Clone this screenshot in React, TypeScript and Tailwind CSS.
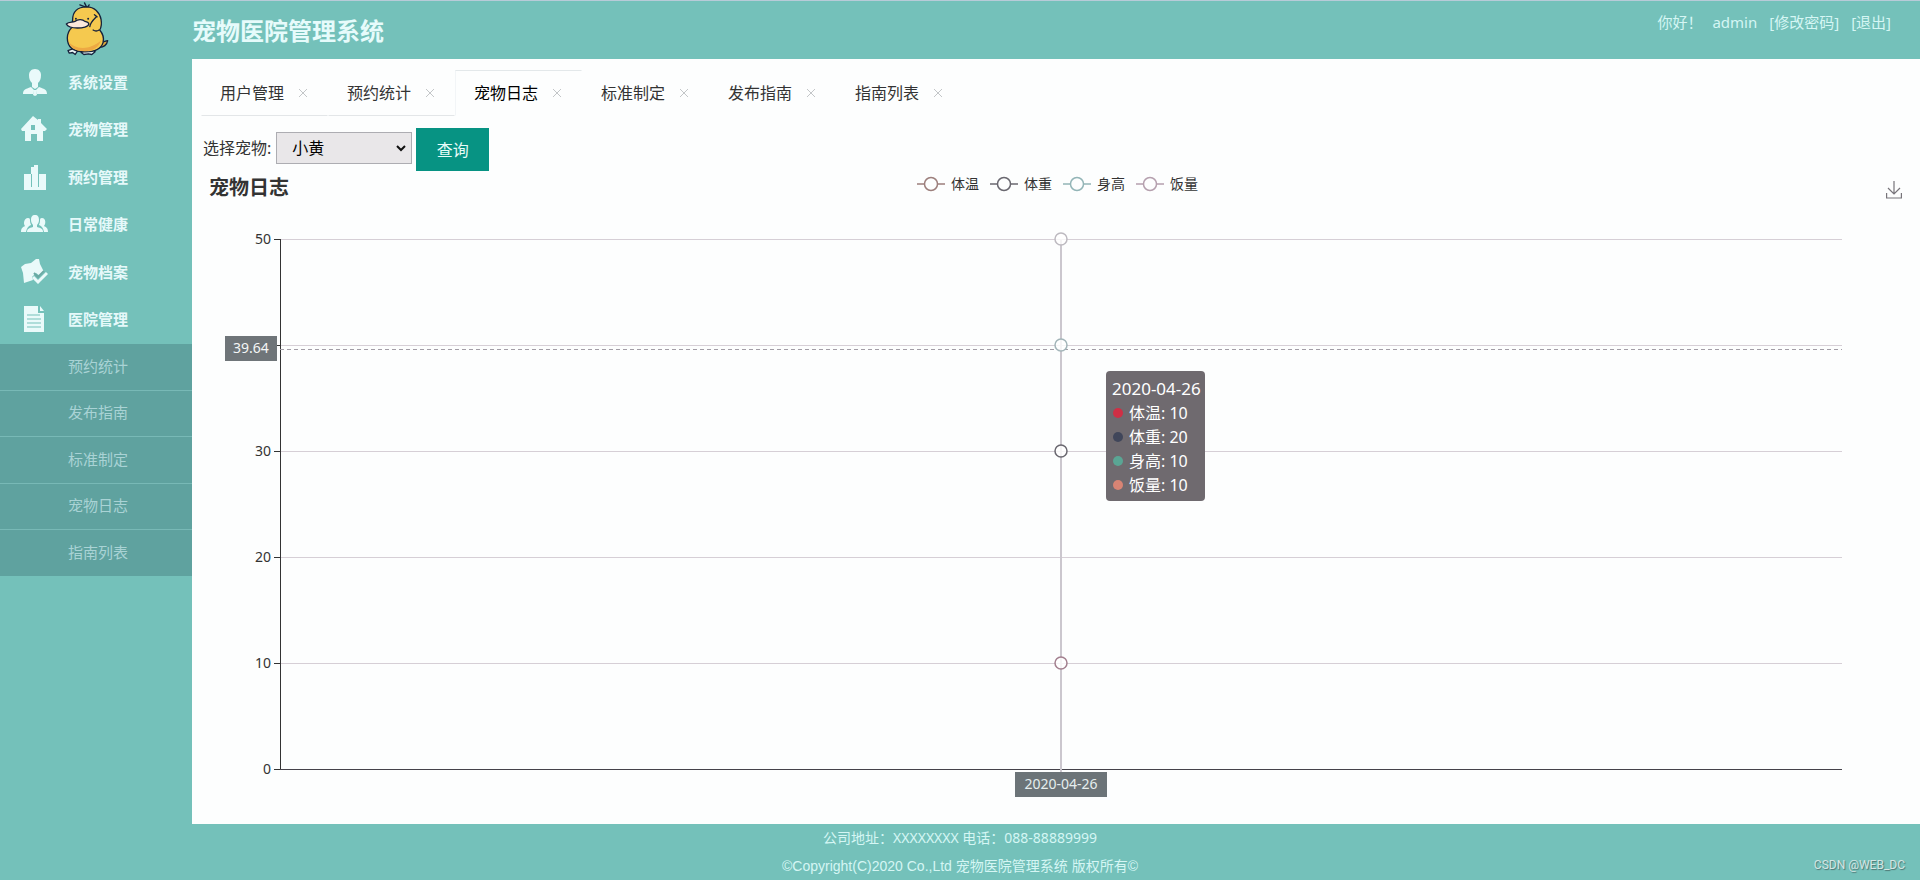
import { useLayoutEffect, useRef, useState } from 'react';
import type { ReactNode } from 'react';

const mainMenu = [
  { label: '系统设置', icon: 'user' },
  { label: '宠物管理', icon: 'home' },
  { label: '预约管理', icon: 'bars' },
  { label: '日常健康', icon: 'group' },
  { label: '宠物档案', icon: 'archive' },
  { label: '医院管理', icon: 'doc' },
];

const subMenu = ['预约统计', '发布指南', '标准制定', '宠物日志', '指南列表'];

const tabs = ['用户管理', '预约统计', '宠物日志', '标准制定', '发布指南', '指南列表'];

const series = [
  { name: '体温', value: 10, stroke: '#9c7f7c', dot: '#cf2f45' },
  { name: '体重', value: 20, stroke: '#6a6870', dot: '#40465a' },
  { name: '身高', value: 10, stroke: '#93b5b7', dot: '#5aa594' },
  { name: '饭量', value: 10, stroke: '#b5a0ae', dot: '#d88474' },
];

const iconShapes: Record<string, ReactNode> = {
  user: (
    <>
      <path d="M15 1c4 0 6 3 6 6 0 4-1 6-3 8v4l-3 2-3-2v-4c-2-2-3-4-3-8 0-3 2-6 6-6z" />
      <path d="M11 19l3 3-1 4H3c0-4 2-5 8-7zM19 19l-3 3 1 4h10c0-4-2-5-8-7zM14 22h2l1 5-2 1-2-1z" />
    </>
  ),
  home: (
    <path
      fillRule="evenodd"
      d="M13 1l5 4V4h3v4l6 6-2 2h-2v10h-6v-7h-6v7H5V16H2l-1-2zM11 10v5h4v-5z"
    />
  ),
  bars: (
    <path fillRule="evenodd" d="M4 11h7V4h3V2h4v9h8v16H4zM11 11v13h1V11zM18 11v13h1V11z" />
  ),
  group: (
    <>
      <path d="M15 5c3 0 4 2 4 5 0 2-1 4-2 5v2c4 1 6 2 6 5H7c0-3 2-4 6-5v-2c-1-1-2-3-2-5 0-3 1-5 4-5z" />
      <path d="M8 8c2 0 2 1 2 3 0 2 1 3 1 4-3 1-4 3-5 7H1c0-4 2-5 4-6-2-2-1-8 3-8zM22 8c-2 0-2 1-2 3 0 2-1 3-1 4 3 1 4 3 5 7h4c0-4-2-5-4-6 2-2 2-8-2-8z" />
    </>
  ),
  archive: (
    <>
      <path d="M1 9l4-3 6-1 5-4h3l1 5 4 8-4 4-4-3-4 4 1 3-9 3L3 15z" />
      <path d="M13 19l5 5 9-9" fill="none" stroke="#eafafa" strokeWidth="3" />
      <path d="M14 15l4 4 6-6" fill="none" stroke="#6aa9a3" strokeWidth="2" />
    </>
  ),
  doc: (
    <>
      <path d="M4 1h14v7h6v19H4zM20 1l4 5h-4z" />
      <path d="M7 10h13M7 14h14M7 18h14M7 22h14" stroke="#74c1ba" />
    </>
  ),
};

function MenuIcon({ name }: { name: string }) {
  return (
    <svg viewBox="0 0 28 28" className="h-7 w-7 shrink-0" fill="#eafafa" aria-hidden="true">
      {iconShapes[name]}
    </svg>
  );
}

function DuckLogo() {
  return (
    <svg viewBox="190 6 136 162" className="h-[54px] w-[45px]" aria-label="logo">
      <g stroke="#14213b" strokeWidth="4" strokeLinejoin="round" strokeLinecap="round">
        <path d="M298 126c10 2 14-2 24-4-2 12-12 22-28 20z" fill="#e0a83c" />
        <path d="M218 146l-16 6 4 8 10-2 8 6 8-12z" fill="#e8f4f4" />
        <path d="M264 150l-22 8 8 6 14-2 10 2 10-8-8-8z" fill="#e8f4f4" />
        <path
          d="M216 60c0-26 16-40 42-40 24 0 40 16 44 38 2 12 2 22-4 32 10 12 14 24 10 38-6 20-26 28-54 28-34 0-54-14-54-42 0-14 6-24 14-32z"
          fill="#f5c94f"
        />
        <path
          d="M204 124c12 22 60 32 98-2-8 22-24 32-50 32-26 0-44-10-48-30z"
          fill="#eda943"
          stroke="none"
        />
        <path
          d="M197 72c8-8 18-4 26-8 10-8 24-6 30 0 8 2 12 2 12 8 0 8-20 12-34 12-18 0-30-4-34-12z"
          fill="#fbe9dc"
        />
        <path d="M288 50c-6 6-18 16-20 30M282 44l8 6M296 90c-6 4-12 4-18 0" fill="none" />
        <path d="M254 20l-16-6M258 20l-6-12M262 20l4-6" fill="none" />
      </g>
      <circle cx="226" cy="56" r="3" fill="#14213b" />
      <circle cx="263" cy="56" r="3" fill="#14213b" />
    </svg>
  );
}

function Sidebar() {
  return (
    <aside className="w-48 shrink-0">
      <nav>
        <ul className="flex h-[285px] flex-col">
          {mainMenu.map((item) => (
            <li key={item.label} className="flex-1">
              <a
                href="#"
                className="flex h-full items-center gap-5 pb-[2px] pl-5 text-[15px] font-bold text-[#e6f9fa]"
              >
                <MenuIcon name={item.icon} />
                {item.label}
              </a>
            </li>
          ))}
        </ul>
        <ul className="flex h-[232px] flex-col divide-y divide-[#78b9b6] bg-[#5fa29f]">
          {subMenu.map((label) => (
            <li key={label} className="flex-1">
              <a
                href="#"
                className="flex h-full items-center pb-[2px] pl-[68px] text-[15px] text-[#a9d3d5]"
              >
                {label}
              </a>
            </li>
          ))}
        </ul>
      </nav>
    </aside>
  );
}

function TabBar() {
  const [active, setActive] = useState(2);

  return (
    <div className="flex pt-[11px] pl-[9px]">
      {tabs.map((label, i) => (
        <div
          key={label}
          className={`flex h-[46px] w-[127px] items-center gap-[14px] border pb-px pl-[18px] ${
            i === active
              ? 'border-transparent border-t-[#e3e8ea] border-l-[#f2f5f7] text-black'
              : i < active
                ? 'border-transparent border-b-[#e3e6e8] text-[#333]'
                : 'border-transparent text-[#333]'
          }`}
        >
          <button type="button" onClick={() => setActive(i)} className="text-base">
            {label}
          </button>
          <button type="button" aria-label={`关闭${label}`}>
            <svg viewBox="0 0 10 10" className="h-[10px] w-[10px]" stroke="#c3c6c8" fill="none">
              <path d="M1 1l8 8M9 1l-8 8" />
            </svg>
          </button>
        </div>
      ))}
    </div>
  );
}

function QueryForm() {
  return (
    <form className="flex items-center pt-3 pl-[11px]" onSubmit={(e) => e.preventDefault()}>
      <label htmlFor="pet" className="pb-1 text-base text-[#333]">
        选择宠物:
      </label>
      <div className="relative mr-1 ml-[5px] pb-1">
        <select
          id="pet"
          className="block h-8 w-[136px] appearance-none border border-[#adadb2] bg-[#e9e7e9] pl-[15px] text-base leading-none text-black"
        >
          <option>小黄</option>
        </select>
        <svg
          viewBox="0 0 10 8"
          className="pointer-events-none absolute top-3 right-[6px] h-2 w-[10px]"
          fill="none"
          stroke="#111"
          strokeWidth="2"
        >
          <path d="M1 2l4 4 4-4" />
        </svg>
      </div>
      <button type="submit" className="h-[43px] w-[73px] bg-[#079383] text-base text-[#e6fbf8]">
        查询
      </button>
    </form>
  );
}

const TOP = 36;
const STEP = 106;
const LEFT = 88;
const RIGHT = 78;

function LineChart() {
  const box = useRef<HTMLDivElement>(null);
  const [width, setWidth] = useState(1728);

  useLayoutEffect(() => {
    const el = box.current;
    if (!el) return;
    const measure = () => setWidth(el.clientWidth);
    measure();
    const observer = new ResizeObserver(measure);
    observer.observe(el);
    return () => observer.disconnect();
  }, []);

  const right = width - RIGHT;
  const mid = Math.round((LEFT + right) / 2);
  const yOf = (v: number) => TOP + ((50 - v) / 10) * STEP;

  // stacked totals of the four series
  const points = [
    { total: 10, stroke: '#a3808f' },
    { total: 30, stroke: '#6a6870' },
    { total: 40, stroke: '#a3b5b9' },
    { total: 50, stroke: '#bdbac0' },
  ];

  return (
    <div ref={box} className="relative h-[620px]">
      <svg width={width} height={620} className="block text-sm" shapeRendering="auto">
        {[50, 40, 30, 20, 10].map((v) => (
          <line key={v} x1={LEFT} x2={right} y1={yOf(v) - 0.5} y2={yOf(v) - 0.5} stroke="#d6cfd6" />
        ))}
        {[50, 40, 30, 20, 10, 0].map((v) => (
          <g key={v}>
            <line x1={LEFT - 6} x2={LEFT} y1={yOf(v) - 0.5} y2={yOf(v) - 0.5} stroke="#333" />
            {v !== 40 && (
              <text x={LEFT - 9} y={yOf(v) + 4} textAnchor="end" fill="#333">
                {v}
              </text>
            )}
          </g>
        ))}
        <line x1={LEFT + 0.5} x2={LEFT + 0.5} y1={TOP - 1} y2={yOf(0)} stroke="#333" />
        <line x1={LEFT} x2={right} y1={yOf(0) - 0.5} y2={yOf(0) - 0.5} stroke="#45424a" />
        <line
          x1={LEFT}
          x2={right}
          y1={TOP + 109.5}
          y2={TOP + 109.5}
          stroke="#a29da6"
          strokeDasharray="4 3"
        />
        <line x1={mid} x2={mid} y1={TOP} y2={yOf(0) + 3} stroke="#cbc7ce" strokeWidth="2" />
        {points.map((p) => (
          <circle
            key={p.total}
            cx={mid}
            cy={yOf(p.total) - 1}
            r="6"
            fill="#fff"
            fillOpacity="0.8"
            stroke={p.stroke}
            strokeWidth="1.5"
          />
        ))}
        <rect x="33" y="132" width="52" height="25" fill="#6f7579" />
        <text x="59" y="149" textAnchor="middle" fill="#f4f6f6">
          39.64
        </text>
        <rect x={mid - 46} y="568" width="92" height="25" fill="#6c7478" />
        <text x={mid} y="585" textAnchor="middle" fill="#e6eeee">
          2020-04-26
        </text>
      </svg>
      <div className="absolute top-[167px] left-[calc(50%+50px)] w-[99px] rounded bg-[#6f6a6f] px-[6px] pt-[6px] pb-1 text-base leading-6 text-white">
        <div className="text-[17px] leading-6 whitespace-nowrap">2020-04-26</div>
        {series.map((s) => (
          <div key={s.name} className="flex items-center gap-[5px] whitespace-nowrap">
            <svg viewBox="0 0 12 12" className="h-3 w-3">
              <circle cx="6" cy="6" r="5" fill={s.dot} />
            </svg>
            {s.name}: {s.value}
          </div>
        ))}
      </div>
    </div>
  );
}

function ChartHeader() {
  return (
    <div className="grid h-[33px] grid-cols-[1fr_auto_1fr] items-center pr-[18px] pl-[17px]">
      <h2 className="text-xl leading-none font-bold text-[#333]">宠物日志</h2>
      <ul className="flex gap-[11px] pb-2 pl-1 text-sm leading-5 text-[#333]">
        {series.map((s) => (
          <li key={s.name} className="flex items-center gap-[6px]">
            <svg viewBox="0 0 28 16" className="h-4 w-7" fill="none" stroke={s.stroke} strokeWidth="1.5">
              <path d="M0 8h7M21 8h7" />
              <circle cx="14" cy="8" r="6.5" />
            </svg>
            {s.name}
          </li>
        ))}
      </ul>
      <button type="button" aria-label="保存为图片" className="justify-self-end pt-1">
        <svg viewBox="0 0 16 18" className="block h-[18px] w-4" fill="none" stroke="#77747a" strokeWidth="1.2">
          <path d="M8 0v13M2 7l6 6 6-6M.6 12v5h14.8v-5" />
        </svg>
      </button>
    </div>
  );
}

export default function App() {
  return (
    <div className="flex min-h-screen flex-col bg-[#74c1ba] font-['Noto_Sans','Noto_Sans_CJK_SC',sans-serif]">
      <header className="flex h-[59px] border-t border-[#b8cbd8]">
        <div className="flex w-48 shrink-0 pt-px pl-16">
          <DuckLogo />
        </div>
        <h1 className="flex-1 pt-3 text-2xl leading-9 font-bold text-[#e6fbfb]">宠物医院管理系统</h1>
        <div className="flex pt-[9px] pr-[29px] text-[15px] leading-6 text-[#d5f6f4]">
          <span className="mr-[10px]">你好！</span>
          <span className="mr-3">admin</span>
          <a href="#" className="mr-3">
            [修改密码]
          </a>
          <a href="#">[退出]</a>
        </div>
      </header>

      <div className="flex flex-1">
        <Sidebar />
        <main className="min-w-0 flex-1 bg-[#fdfefe]">
          <TabBar />
          <QueryForm />
          <ChartHeader />
          <LineChart />
        </main>
      </div>

      <footer className="relative h-14 text-center text-sm leading-7 text-[#d5f6f4]">
        <p>公司地址：XXXXXXXX 电话：088-88889999</p>
        <p className="font-['Liberation_Sans','Noto_Sans_CJK_SC',sans-serif]">
          ©Copyright(C)2020 Co.,Ltd 宠物医院管理系统 版权所有©
        </p>
        <span className="absolute right-[15px] bottom-[7px] font-['Roboto',sans-serif] text-xs leading-4 text-[#d3e6e4] [text-shadow:1px_1px_1px_#4d7471]">
          CSDN @WEB_DC
        </span>
      </footer>
    </div>
  );
}
